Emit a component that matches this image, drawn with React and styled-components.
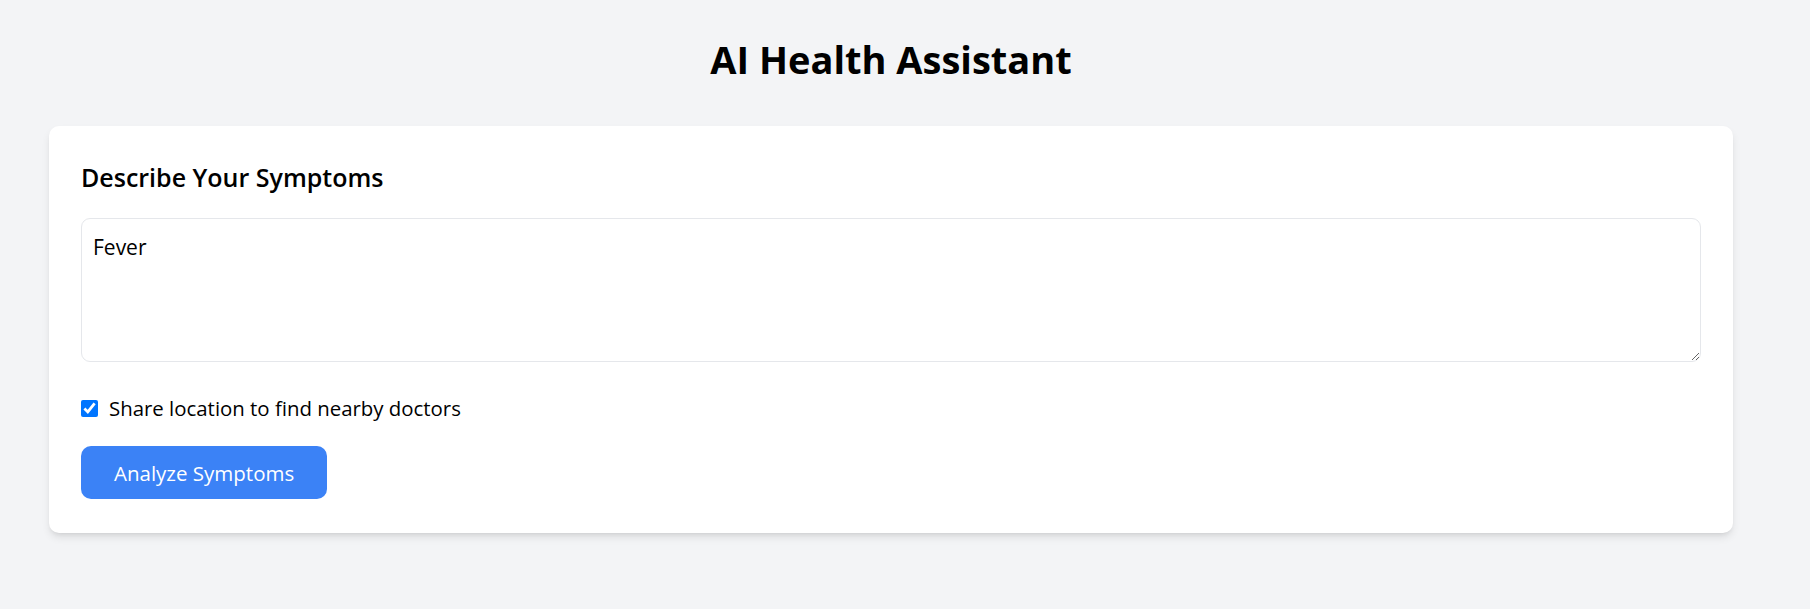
import React, {useState} from 'react'
import styled, {createGlobalStyle} from 'styled-components'

const GlobalStyle = createGlobalStyle`
    body {
        margin: 0;
        background: #f3f4f6;
        font-family: "Open Sans", "Noto Sans", sans-serif;
        color: #000;
    }
`

const Page = styled.main`
    box-sizing: border-box;
    width: 1782px;
    min-height: 100vh;
    padding: 37px 49px;
`

const Title = styled.h1`
    margin: 0 0 45px;
    font-size: 38px;
    line-height: 44px;
    font-weight: 700;
    text-align: center;
`

const Card = styled.section`
    background: #fff;
    border-radius: 10px;
    padding: 34px 32px;
    box-shadow: 0 5px 8px -1px rgba(0, 0, 0, 0.1), 0 3px 5px -3px rgba(0, 0, 0, 0.1);
`

const Heading = styled.h2`
    margin: 0 0 24px;
    font-size: 25px;
    line-height: 34px;
    font-weight: 600;
`

const Symptoms = styled.textarea`
    display: block;
    box-sizing: border-box;
    width: 100%;
    height: 144px;
    margin: 0;
    padding: 12px 11px;
    border: 1px solid #e5e7eb;
    border-radius: 9px;
    font-family: inherit;
    font-size: 21px;
    line-height: 32px;
    color: #000;
    outline: none;
`

const CheckRow = styled.label`
    display: flex;
    align-items: center;
    gap: 11px;
    margin: 32px 0 24px;
    font-size: 20.4px;
    line-height: 28px;
`

const Check = styled.input`
    width: 17px;
    height: 17px;
    margin: 0;
`

const Button = styled.button`
    height: 53px;
    padding: 0 33px;
    border: none;
    border-radius: 10px;
    background: #3b82f6;
    color: #fff;
    font-family: inherit;
    font-size: 20.5px;
    cursor: pointer;
`

export default function App() {
    const [text, setText] = useState('Fever')
    const [share, setShare] = useState(true)

    return (
        <>
            <GlobalStyle/>
            <Page>
                <Title>AI Health Assistant</Title>
                <Card>
                    <Heading>Describe Your Symptoms</Heading>
                    <Symptoms value={text} onChange={e => setText(e.target.value)}/>
                    <CheckRow>
                        <Check type="checkbox" checked={share} onChange={e => setShare(e.target.checked)}/>
                        Share location to find nearby doctors
                    </CheckRow>
                    <Button>Analyze Symptoms</Button>
                </Card>
            </Page>
        </>
    )
}
